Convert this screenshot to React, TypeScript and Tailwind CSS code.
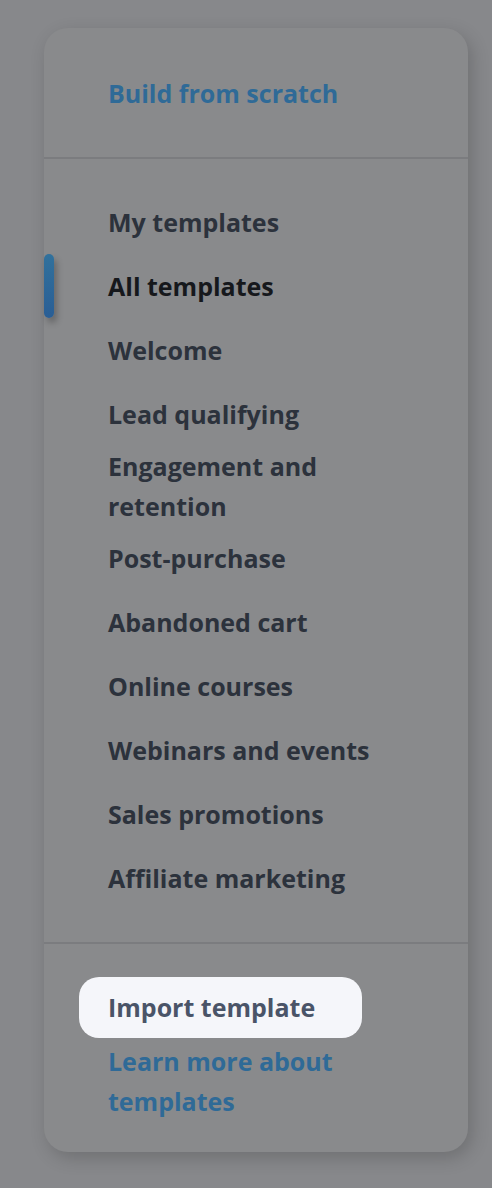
export default function App() {
  const items = [
    "My templates",
    "All templates",
    "Welcome",
    "Lead qualifying",
    "Engagement and retention",
    "Post-purchase",
    "Abandoned cart",
    "Online courses",
    "Webinars and events",
    "Sales promotions",
    "Affiliate marketing",
  ];
  return (
    <div
      className="min-h-[1188px] w-full bg-[#87888b] pt-[28px] pl-[44px]"
      style={{ fontFamily: "'Open Sans', 'Noto Sans', sans-serif" }}
    >
      <div className="relative w-[424px] h-[1124px] rounded-[24px] bg-[#898a8c] shadow-[4px_6px_18px_rgba(0,0,0,0.18)] flex flex-col">
        <div className="pl-[64px] pt-[45px] pb-[44px]">
          <span className="text-[25px] leading-[40px] font-bold text-[#2f6a97]">Build from scratch</span>
        </div>
        <div className="h-[2px] bg-[#7b7c7f]" />
        <ul className="pt-[31px] pb-[32px] pl-[64px] pr-[61px] flex flex-col">
          {items.map((label) => {
            const active = label === "All templates";
            return (
              <li key={label} className="relative min-h-[64px] flex items-center">
                {active && (
                  <span className="absolute left-[-64px] top-0 w-[10px] h-[64px] rounded-full bg-gradient-to-b from-[#31719c] to-[#2a5e95] shadow-[3px_5px_6px_rgba(0,0,0,0.25)]" />
                )}
                <span
                  className={`text-[25px] leading-[40px] font-bold ${active ? "text-[#16181c]" : "text-[#2c323c]"}`}
                >
                  {label}
                </span>
              </li>
            );
          })}
        </ul>
        <div className="h-[2px] bg-[#7b7c7f]" />
        <div className="pt-[33px] pl-[35px] flex flex-col items-start">
          <button className="w-[283px] h-[61px] rounded-[20px] bg-[#f5f6fa] pl-[29px] text-left text-[25px] font-bold text-[#4a5468]">
            Import template
          </button>
          <a className="mt-[3px] pl-[29px] w-[280px] text-[25px] leading-[40px] font-bold text-[#2f6a97]">
            Learn more about templates
          </a>
        </div>
      </div>
    </div>
  );
}
